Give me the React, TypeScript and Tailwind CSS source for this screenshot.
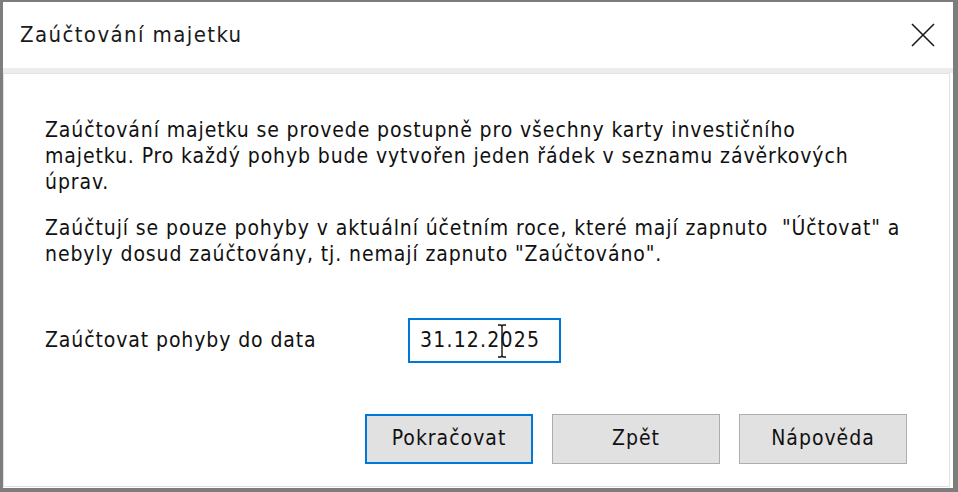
import React from 'react';

const font = { fontFamily: '"DejaVu Sans Condensed", "DejaVu Sans", "Liberation Sans", sans-serif' };

const DialogButton = ({ label, primary }: { label: string; primary?: boolean }) => (
    <button
        className={`w-[168px] h-[50px] bg-[#e1e1e1] text-[21px] tracking-[1px] text-[#111] ${primary ? 'border-2 border-[#0078d7]' : 'border border-[#adadad]'}`}
    >
        {label}
    </button>
);

const App = () => {
    return (
        <div className="w-[958px] h-[492px] bg-white text-[#111] overflow-hidden" style={font}>
            <div className="w-full h-full flex flex-col border-l-[3px] border-t-[2px] border-r-[5px] border-b-[4px] border-[#7d7d7d]">
                {/* title bar */}
                <div className="h-[66px] flex items-center justify-between pl-[17px] pr-[15px] flex-none">
                    <span className="text-[22px] tracking-[1.4px] text-[#1a1a1a] pb-[1px]">Zaúčtování majetku</span>
                    <svg width="26" height="26" viewBox="0 0 26 26" className="mr-[2px]">
                        <path d="M2 2 L24 24 M24 2 L2 24" stroke="#1a1a1a" strokeWidth="1.6" fill="none" />
                    </svg>
                </div>
                <div className="h-[5px] bg-[#ececec] flex-none" />

                {/* content */}
                <div className="flex-1 flex flex-col border border-[#e1e1e1] mr-[3px] mb-[1px] pt-[43px] pl-[41px] pr-[20px] text-[21px] tracking-[0.9px] whitespace-nowrap">
                    <p className="leading-[26px]">
                        Zaúčtování majetku se provede postupně pro všechny karty investičního<br />
                        majetku. Pro každý pohyb bude vytvořen jeden řádek v seznamu závěrkových<br />
                        úprav.
                    </p>
                    <p className="leading-[26px] mt-[20px]">
                        Zaúčtují se pouze pohyby v aktuální účetním roce, které mají zapnuto &nbsp;"Účtovat" a<br />
                        nebyly dosud zaúčtovány, tj. nemají zapnuto "Zaúčtováno".
                    </p>

                    <div className="flex items-center mt-[51px]">
                        <span className="w-[363px]">Zaúčtovat pohyby do data</span>
                        <div className="relative w-[153px] h-[45px] border-2 border-[#0078d7] flex items-center pl-[10px] tracking-[1.2px]">
                            31.12.2025
                            {/* mouse I-beam over the field */}
                            <svg width="10" height="34" viewBox="0 0 10 34" className="absolute left-[87px] top-[4px]">
                                <path d="M1 1 H3.5 Q5 1 5 3 V31 Q5 33 3.5 33 H1 M9 1 H6.5 Q5 1 5 3 M5 31 Q5 33 6.5 33 H9" stroke="#111" strokeWidth="1.4" fill="none" />
                            </svg>
                        </div>
                    </div>

                    <div className="flex justify-end gap-[19px] mt-[51px] pr-[22px]">
                        <DialogButton label="Pokračovat" primary />
                        <DialogButton label="Zpět" />
                        <DialogButton label="Nápověda" />
                    </div>
                </div>
            </div>
        </div>
    );
};

export default App;
